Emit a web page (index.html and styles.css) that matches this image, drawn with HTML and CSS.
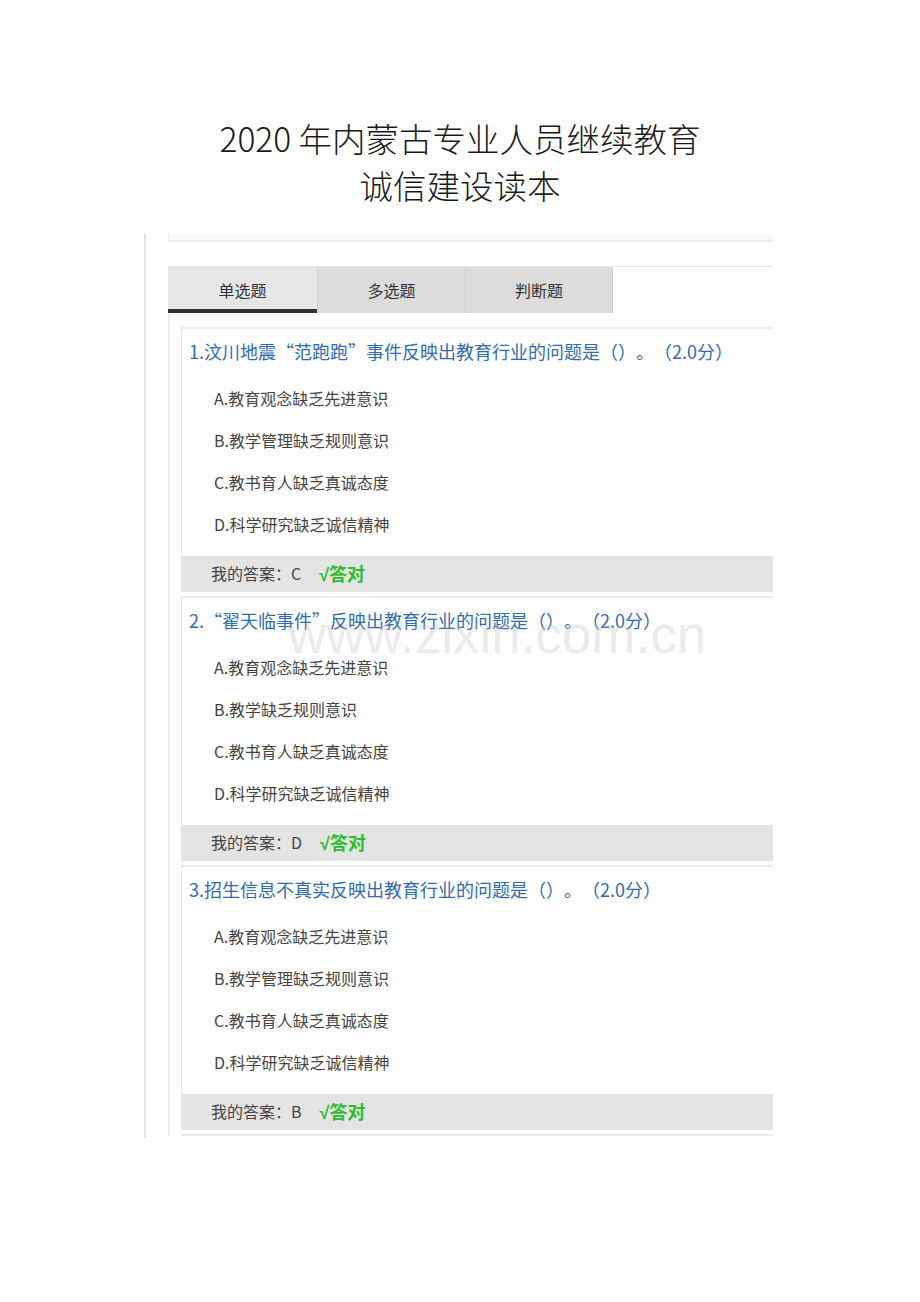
FILE: index.html
```html
<!DOCTYPE html>
<html lang="zh-CN">
<head>
<meta charset="utf-8">
<title>2020年内蒙古专业人员继续教育 诚信建设读本</title>
<link rel="stylesheet" href="styles.css">
</head>
<body>
<header class="doc-title">
  <div class="line">2020 年内蒙古专业人员继续教育</div>
  <div class="line">诚信建设读本</div>
</header>

<section class="panel">
  <div class="inner">
    <div class="topbox"></div>
    <div class="tabs">
      <div class="tab active">单选题</div>
      <div class="tab">多选题</div>
      <div class="tab">判断题</div>
    </div>
    <div class="content">
      <div class="q">
        <div class="q-title">1.汶川地震“范跑跑”事件反映出教育行业的问题是（）。（2.0分）</div>
        <ul class="opts">
          <li>A.教育观念缺乏先进意识</li>
          <li>B.教学管理缺乏规则意识</li>
          <li>C.教书育人缺乏真诚态度</li>
          <li>D.科学研究缺乏诚信精神</li>
        </ul>
        <div class="answer"><span class="mine">我的答案：C</span><span class="ok"><span class="tick">√</span>答对</span></div>
      </div>
      <div class="q">
        <div class="q-title">2.“翟天临事件”反映出教育行业的问题是（）。（2.0分）</div>
        <ul class="opts">
          <li>A.教育观念缺乏先进意识</li>
          <li>B.教学缺乏规则意识</li>
          <li>C.教书育人缺乏真诚态度</li>
          <li>D.科学研究缺乏诚信精神</li>
        </ul>
        <div class="answer"><span class="mine">我的答案：D</span><span class="ok"><span class="tick">√</span>答对</span></div>
      </div>
      <div class="q">
        <div class="q-title">3.招生信息不真实反映出教育行业的问题是（）。（2.0分）</div>
        <ul class="opts">
          <li>A.教育观念缺乏先进意识</li>
          <li>B.教学管理缺乏规则意识</li>
          <li>C.教书育人缺乏真诚态度</li>
          <li>D.科学研究缺乏诚信精神</li>
        </ul>
        <div class="answer"><span class="mine">我的答案：B</span><span class="ok"><span class="tick">√</span>答对</span></div>
      </div>
      <div class="q"></div>
    </div>
  </div>
</section>

<div class="watermark">www.zixin.com.cn</div>
</body>
</html>
```

FILE: styles.css
```css
html, body {
  margin: 0;
  padding: 0;
  background: #ffffff;
}
body {
  position: relative;
  width: 920px;
  height: 1302px;
  font-family: "Noto Sans CJK SC", "Noto Sans", sans-serif;
  color: #333;
  text-spacing-trim: space-all;
}
.doc-title {
  padding-top: 114px;
  text-align: center;
  font-size: 33.5px;
  line-height: 47px;
  color: #1a1a1a;
  font-weight: 300;
}
.panel {
  margin-top: 26px;
  margin-left: 144px;
  width: 629px;
  height: 904px;
  border-left: 2px solid #e4e4e4;
  overflow: hidden;
  box-sizing: border-box;
}
.inner {
  margin-left: 22px;
}
.topbox {
  height: 6px;
  background: #fafafa;
  border-left: 1px solid #eeeeee;
  border-bottom: 2px solid #ececec;
}
.tabs {
  margin-top: 24px;
  display: flex;
  height: 46px;
  border-top: 1px solid #e6e6e6;
}
.tab {
  width: 148px;
  display: flex;
  align-items: center;
  justify-content: center;
  background: #dcdcdc;
  border-left: 1px solid #cfcfcf;
  font-size: 16px;
  color: #333;
  box-sizing: border-box;
}
.tab:last-child {
  border-right: 1px solid #d0d0d0;
}
.tab.active {
  width: 149px;
  border-left: none;
  background: #e6e6e6;
  border-bottom: 4px solid #333;
  padding-top: 4px;
}
.content {
  border-left: 2px solid #ececec;
  padding-left: 11px;
  padding-top: 14px;
}
.q {
  border-top: 2px solid #ececec;
  border-left: 1px solid #e6e6e6;
  margin-bottom: 4px;
}
.q-title {
  padding: 9px 0 0 7px;
  font-size: 18px;
  line-height: 26px;
  color: #2f6cb3;
  white-space: nowrap;
  text-spacing-trim: space-all;
}
.opts {
  list-style: none;
  margin: 13px 0 0 0;
  padding: 0 0 0 32px;
}
.opts li {
  height: 42px;
  line-height: 42px;
  font-size: 16px;
  color: #444;
  white-space: nowrap;
}
.answer {
  margin-top: 11px;
  height: 36px;
  box-sizing: border-box;
  padding-bottom: 2px;
  background: #e4e4e4;
  display: flex;
  align-items: center;
  padding-left: 29px;
}
.mine {
  font-size: 16px;
  color: #444;
}
.ok {
  margin-left: 18px;
  font-size: 18px;
  font-weight: 700;
  color: #2bbd2b;
}
.tick {
  font-family: "Liberation Sans", Arial, sans-serif;
  font-weight: 700;
}
.watermark {
  position: absolute;
  left: 288px;
  top: 600px;
  font-family: "Liberation Sans", Arial, sans-serif;
  font-size: 53px;
  line-height: 70px;
  color: rgba(190, 190, 190, 0.3);
  pointer-events: none;
}
```
